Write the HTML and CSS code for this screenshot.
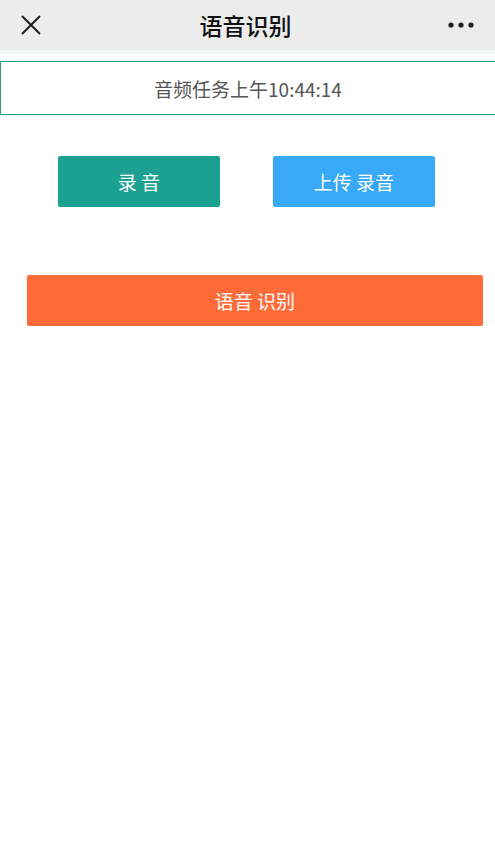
FILE: index.html
```html
<!DOCTYPE html>
<html lang="zh">
<head>
<meta charset="utf-8">
<title>语音识别</title>
<link rel="stylesheet" href="styles.css">
</head>
<body>
<header class="topbar">
  <span class="close">
    <svg width="20" height="20" viewBox="0 0 20 20"><path d="M1 1L19 19M19 1L1 19" stroke="#1e1e1e" stroke-width="2" fill="none"/></svg>
  </span>
  <h1 class="title">语音识别</h1>
  <span class="more">
    <svg width="26" height="6" viewBox="0 0 26 6"><circle cx="3" cy="3" r="2.6" fill="#1e1e1e"/><circle cx="13" cy="3" r="2.6" fill="#1e1e1e"/><circle cx="23" cy="3" r="2.6" fill="#1e1e1e"/></svg>
  </span>
</header>
<main class="content">
  <div class="task">音频任务上午10:44:14</div>
  <div class="row">
    <button class="btn btn-record">录 音</button>
    <button class="btn btn-upload">上传 录音</button>
  </div>
  <button class="btn btn-recognize">语音 识别</button>
</main>
</body>
</html>
```
FILE: styles.css
```css
html, body {
  margin: 0;
  padding: 0;
  background: #fff;
  font-family: "Noto Sans CJK SC", "Noto Sans", sans-serif;
}
.topbar {
  height: 50px;
  background: #ececec;
  display: flex;
  align-items: center;
  justify-content: space-between;
  padding: 0 21px 0 21px;
  border-bottom: 4px solid #f1f5f4;
}
.close {
  display: flex;
  width: 20px;
  height: 20px;
  margin-top: 0;
}
.more {
  display: flex;
  margin-right: 0;
}
.title {
  margin: 0;
  font-size: 23px;
  font-weight: 500;
  color: #111;
  margin-left: 2px;
}
.content {
  display: flex;
  flex-direction: column;
  padding-top: 7px;
}
.task {
  height: 52px;
  border: 1px solid #2a9b87;
  border-right: none;
  display: flex;
  align-items: center;
  justify-content: center;
  font-size: 19px;
  color: #555;
}
.row {
  display: flex;
  gap: 53px;
  padding-left: 58px;
  margin-top: 41px;
}
.btn {
  border: none;
  border-radius: 2px;
  height: 51px;
  color: #fff;
  font-family: "Noto Sans CJK SC", "Noto Sans", sans-serif;
  font-size: 19px;
  padding: 0;
}
.btn-record {
  width: 162px;
  background: #1ba091;
}
.btn-upload {
  width: 162px;
  background: #38a9f6;
}
.btn-recognize {
  width: 456px;
  margin-left: 27px;
  margin-top: 68px;
  background: #ff6a39;
}
```
